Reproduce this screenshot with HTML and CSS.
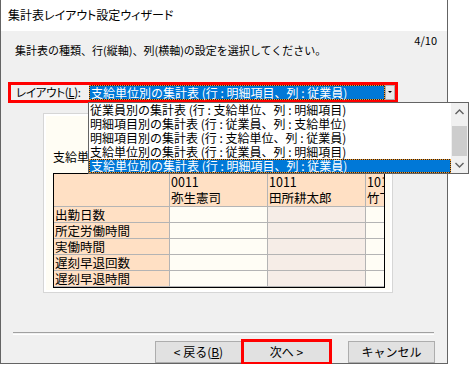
FILE: index.html
```html
<!DOCTYPE html>
<html lang="ja">
<head>
    <meta charset="UTF-8">
    <title>集計表レイアウト設定ウィザード</title>
    <link rel="stylesheet" href="styles.css">
</head>
<body>
    <div class="window">
        <div class="titlebar">集計表レイアウト設定ウィザード</div>

        <div class="head">
            <p class="lead">集計表の種類、行(縦軸)、列(横軸)の設定を選択してください。</p>
            <div class="step">4/10</div>
        </div>

        <!-- Layout combo -->
        <div class="layout-row">
            <span class="layout-label">レイアウト(<u>L</u>):</span>
            <div class="combo">
                <span class="combo-value">支給単位別の集計表 (行 : 明細項目、列 : 従業員)</span>
                <span class="combo-arrow"></span>
            </div>
        </div>

        <!-- Preview -->
        <div class="preview">
            <div class="preview-title">支給単位別の集計表</div>
            <div class="grid">
                <div class="cell head-cell"></div>
                <div class="cell head-cell">0011<br>弥生憲司</div>
                <div class="cell head-cell">1011<br>田所耕太郎</div>
                <div class="cell head-cell">1012<br>竹下</div>

                <div class="cell row-head">出勤日数</div>
                <div class="cell c2"></div><div class="cell c3"></div><div class="cell c4"></div>
                <div class="cell row-head">所定労働時間</div>
                <div class="cell c2"></div><div class="cell c3"></div><div class="cell c4"></div>
                <div class="cell row-head">実働時間</div>
                <div class="cell c2"></div><div class="cell c3"></div><div class="cell c4"></div>
                <div class="cell row-head">遅刻早退回数</div>
                <div class="cell c2"></div><div class="cell c3"></div><div class="cell c4"></div>
                <div class="cell row-head">遅刻早退時間</div>
                <div class="cell c2"></div><div class="cell c3"></div><div class="cell c4"></div>
            </div>
        </div>

        <!-- Footer -->
        <div class="sep"></div>
        <div class="buttons">
            <button class="btn">&lt; 戻る(<u>B</u>)</button>
            <button class="btn btn-next">次へ &gt;</button>
            <button class="btn btn-cancel">キャンセル</button>
        </div>

        <!-- Open dropdown list -->
        <div class="dropdown">
            <ul class="options">
                <li>従業員別の集計表 (行 : 支給単位、列 : 明細項目)</li>
                <li>明細項目別の集計表 (行 : 従業員、列 : 支給単位)</li>
                <li>明細項目別の集計表 (行 : 支給単位、列 : 従業員)</li>
                <li>支給単位別の集計表 (行 : 従業員、列 : 明細項目)</li>
                <li class="selected">支給単位別の集計表 (行 : 明細項目、列 : 従業員)</li>
            </ul>
            <div class="scrollbar">
                <span class="sb-btn">
                    <svg width="9" height="6" viewBox="0 0 9 6"><path d="M0.5 5 L4.5 1 L8.5 5" fill="none" stroke="#606060" stroke-width="1.4"/></svg>
                </span>
                <span class="sb-track"><span class="sb-thumb"></span></span>
                <span class="sb-btn">
                    <svg width="9" height="6" viewBox="0 0 9 6"><path d="M0.5 1 L4.5 5 L8.5 1" fill="none" stroke="#606060" stroke-width="1.4"/></svg>
                </span>
            </div>
        </div>
    </div>
</body>
</html>
```

FILE: styles.css
```css
body {
    margin: 0;
    background: #fff;
    font-family: "Noto Sans CJK JP", sans-serif;
    font-size: 12px;
    color: #000;
}
.window {
    position: relative;
    width: 448px;
    height: 364px;
    box-sizing: border-box;
    border: 1px solid #646464;
    border-top: none;
    background: #f0f0f0;
}
.titlebar {
    height: 31px;
    background: #fff;
    padding-left: 7px;
    line-height: 30px;
    font-size: 12px;
    font-feature-settings: "palt";
}
.head {
    display: flex;
    justify-content: space-between;
    height: 51px;
    box-sizing: border-box;
    padding: 2px 10px 0 14px;
}
.lead {
    margin: 10px 0 0;
    line-height: 14px;
    font-size: 11px;
}
.step {
    line-height: 14px;
    font-size: 11px;
}
.layout-row {
    margin-left: 7px;
    width: 390px;
    height: 21px;
    box-sizing: border-box;
    border: 3px solid #f00;
    display: flex;
    align-items: center;
}
.layout-label {
    width: 73px;
    padding-left: 5px;
    line-height: 15px;
    font-size: 11.5px;
    letter-spacing: -0.3px;
    white-space: nowrap;
    font-feature-settings: "palt";
}
.combo {
    flex: 1;
    display: flex;
    height: 15px;
}
.combo-value {
    flex: 1;
    box-sizing: border-box;
    padding-left: 1px;
    line-height: 13px;
    color: #fff;
    white-space: nowrap;
    border: 1px dotted #f59b2a;
    background: linear-gradient(#0078d7, #0078d7) padding-box, linear-gradient(#222, #222) border-box;
}
.combo-arrow {
    width: 10px;
    box-sizing: border-box;
    border: 1px solid #adadad;
    background: #e8e8e8;
    position: relative;
}
.combo-arrow::after {
    content: "";
    position: absolute;
    left: 2px;
    top: 5px;
    border-left: 2px solid transparent;
    border-right: 2px solid transparent;
    border-top: 2px solid #000;
}
.preview {
    margin: 10px 0 0 42px;
    width: 350px;
    height: 180px;
    box-sizing: border-box;
    border: 1px solid #d6d6d6;
    box-shadow: inset 0 0 0 2px #fff;
    background: #fffdf4;
    padding: 36px 0 0 9px;
}
.preview-title {
    line-height: 14px;
    white-space: nowrap;
}
.grid {
    margin-top: 9px;
    width: 332px;
    height: 115px;
    box-sizing: border-box;
    border: 1px solid #000;
    overflow: hidden;
    display: grid;
    grid-template-columns: 116px 98px 98px 98px;
    grid-template-rows: 33px repeat(5, 16px);
}
.cell {
    box-sizing: border-box;
    border-right: 1px solid #b4b4b4;
    border-bottom: 1px solid #b4b4b4;
    padding-left: 1px;
    line-height: 15px;
    font-size: 12.5px;
    white-space: nowrap;
}
.head-cell {
    background: #ffe0c4;
    line-height: 16px;
}
.row-head {
    background: #ffe0c4;
}
.c2, .c4 {
    background: #fffdf5;
}
.c3 {
    background: #f6ede7;
}
.sep {
    margin: 39px 0 0 12px;
    width: 421px;
    height: 1px;
    border-top: 1px solid #a0a0a0;
    border-bottom: 1px solid #fff;
}
.buttons {
    display: flex;
    margin: 6px 0 0 154px;
}
.btn {
    width: 87px;
    height: 22px;
    box-sizing: border-box;
    border: 1px solid #adadad;
    background: #e1e1e1;
    font-family: inherit;
    font-size: 12px;
    padding: 0;
    line-height: 18px;
    color: #000;
}
.btn-next {
    margin-left: 1px;
    outline: 3px solid #f00;
    outline-offset: -1px;
}
.btn-cancel {
    margin-left: 18px;
}
.dropdown {
    position: absolute;
    left: 87px;
    top: 102px;
    width: 381px;
    height: 72px;
    box-sizing: border-box;
    border: 1px solid #646464;
    background: #fff;
    display: flex;
}
.options {
    flex: 1;
    list-style: none;
    margin: 0;
    padding: 0;
}
.options li {
    height: 14px;
    box-sizing: border-box;
    line-height: 14px;
    padding-left: 1px;
    white-space: nowrap;
}
.options li.selected {
    color: #fff;
    line-height: 12px;
    border: 1px dotted #f59b2a;
    background: linear-gradient(#0078d7, #0078d7) padding-box, linear-gradient(#222, #222) border-box;
}
.scrollbar {
    width: 17px;
    background: #f0f0f0;
    display: flex;
    flex-direction: column;
}
.sb-btn {
    height: 17px;
    display: flex;
    align-items: center;
    justify-content: center;
}
.sb-track {
    flex: 1;
    padding: 6px 1px 0;
}
.sb-thumb {
    display: block;
    height: 30px;
    background: #cdcdcd;
}
```
